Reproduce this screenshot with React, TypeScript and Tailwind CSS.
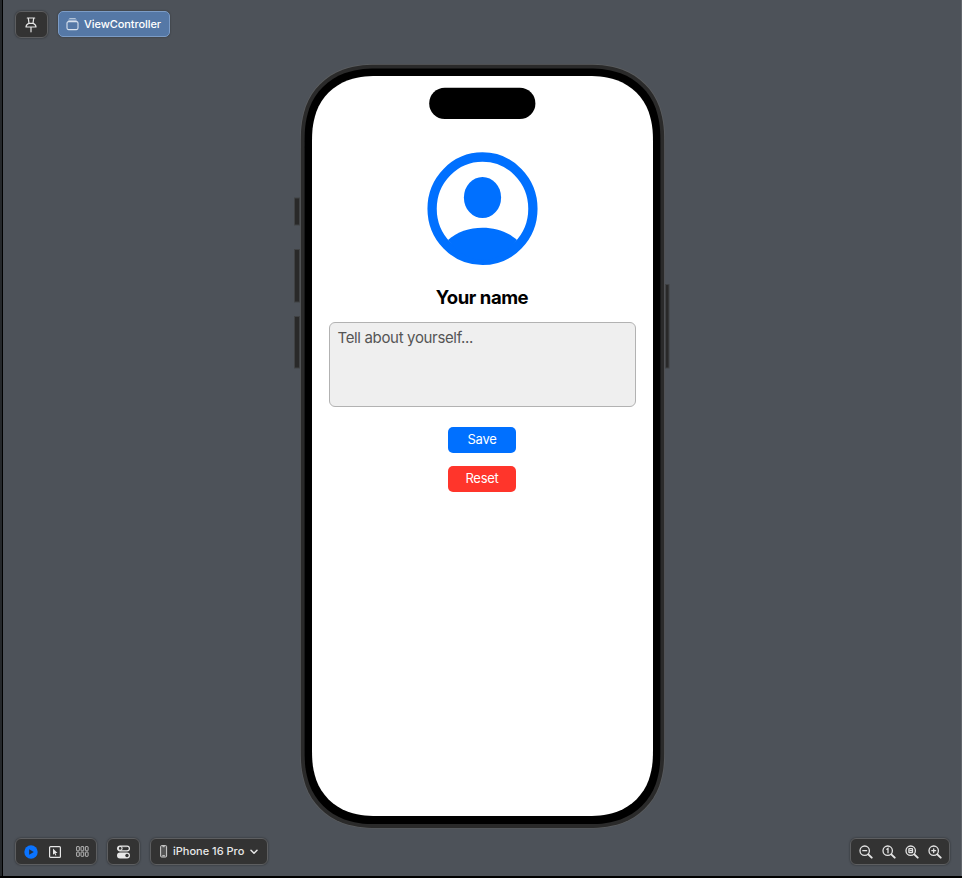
import React from "react";

type BoxProps = { className?: string; children: React.ReactNode };

// Rounded rectangle with continuous-curvature corners.
function squircle(x: number, y: number, w: number, h: number, r: number) {
  const a = 1.25 * r;
  const b = 0.98 * r;
  const c = 0.86841 * r;
  const d = 0.63149 * r;
  const e = 0.07491 * r;
  const f = 0.37282 * r;
  const g = 0.16906 * r;
  const R = x + w;
  const B = y + h;
  return [
    `M${x + a} ${y}H${R - a}`,
    `C${R - b} ${y} ${R - c} ${y} ${R - d} ${y + e}`,
    `C${R - f} ${y + g} ${R - g} ${y + f} ${R - e} ${y + d}`,
    `C${R} ${y + c} ${R} ${y + b} ${R} ${y + a}V${B - a}`,
    `C${R} ${B - b} ${R} ${B - c} ${R - e} ${B - d}`,
    `C${R - g} ${B - f} ${R - f} ${B - g} ${R - d} ${B - e}`,
    `C${R - c} ${B} ${R - b} ${B} ${R - a} ${B}H${x + a}`,
    `C${x + b} ${B} ${x + c} ${B} ${x + d} ${B - e}`,
    `C${x + f} ${B - g} ${x + g} ${B - f} ${x + e} ${B - d}`,
    `C${x} ${B - c} ${x} ${B - b} ${x} ${B - a}V${y + a}`,
    `C${x} ${y + b} ${x} ${y + c} ${x + e} ${y + d}`,
    `C${x + g} ${y + f} ${x + f} ${y + g} ${x + d} ${y + e}`,
    `C${x + c} ${y} ${x + b} ${y} ${x + a} ${y}Z`,
  ].join("");
}

function ToolBox({ className = "", children }: BoxProps) {
  return (
    <div
      className={`flex h-[27px] items-center rounded-[6px] border border-[#5d5e60] bg-[#333333] shadow-[0_0_2px_rgba(0,0,0,0.5)] ${className}`}
    >
      {children}
    </div>
  );
}

function PinIcon() {
  return (
    <svg width="12" height="16" viewBox="0 0 12 16" fill="none" stroke="#e6e6e6" strokeWidth="1.2" strokeLinejoin="round" strokeLinecap="round">
      <path d="M2.3 1h7.4M3.3 1.2 4 6.3C2 7.2 1 8.4 1 10h10c0-1.6-1-2.8-3-3.7l.7-5.1M4 6.300h4M6 10.200v4.600" />
    </svg>
  );
}

function ControllerIcon() {
  return (
    <svg width="13" height="14" viewBox="0 0 13 14" fill="none" stroke="#d9e2ee" strokeLinecap="round">
      <path d="M3.7 1.500h5.600" strokeWidth="1" opacity=".7" />
      <path d="M2.700 3.200h7.600" strokeWidth="1" opacity=".85" />
      <rect x="1" y="4.600" width="11" height="8" rx="1.500" strokeWidth="1.100" />
    </svg>
  );
}

function PlayIcon() {
  return (
    <svg width="14" height="14" viewBox="0 0 14 14">
      <circle cx="7" cy="7" r="6.700" fill="#0a73ff" />
      <path d="M5.100 4.200v5.600L9.800 7z" fill="#25303f" />
    </svg>
  );
}

function SelectIcon() {
  return (
    <svg width="12" height="12" viewBox="0 0 12 12">
      <rect x=".6" y=".6" width="10.800" height="10.800" rx="1" fill="none" stroke="#e6e6e6" strokeWidth="1.200" />
      <path d="M4 2.400v6.300l1.500-1.300.9 2.200 1-.4-.9-2.100h2z" fill="#e6e6e6" />
    </svg>
  );
}

function GridIcon() {
  return (
    <svg width="13" height="11" viewBox="0 0 13 11" fill="none" stroke="#c4c4c4" strokeWidth=".9">
      {[0.6, 5, 9.4].map((x) =>
        [0.6, 6.1].map((y) => <rect key={`${x}-${y}`} x={x} y={y} width="2.700" height="4.200" rx=".4" />),
      )}
    </svg>
  );
}

function SettingsIcon() {
  return (
    <svg width="13" height="14" viewBox="0 0 13 14">
      <rect x=".6" y="1.100" width="11.800" height="4.700" rx="2.350" fill="none" stroke="#e8e8e8" strokeWidth="1.200" />
      <circle cx="3.200" cy="3.450" r="1.900" fill="none" stroke="#e8e8e8" strokeWidth="1.100" />
      <path d="M5 1.500h5v.8H5z" fill="#e8e8e8" opacity=".4" />
      <rect x="0" y="7.500" width="13" height="5.900" rx="2.950" fill="#e8e8e8" />
      <circle cx="10" cy="10.450" r="1.700" fill="#333333" />
    </svg>
  );
}

function PhoneIcon() {
  return (
    <svg width="8" height="13" viewBox="0 0 8 13">
      <rect x=".6" y=".6" width="6" height="11.400" rx="1" fill="#555555" stroke="#cfcfcf" strokeWidth="1" />
      <path d="M2.500 1.700h2.200M2.300 10.700h2.600" stroke="#dedede" strokeWidth=".9" />
    </svg>
  );
}

function Magnifier({ children }: { children: React.ReactNode }) {
  return (
    <svg width="14" height="14" viewBox="0 0 14 14" fill="none" stroke="#e4e4e4" strokeWidth="1.300" strokeLinecap="round">
      <circle cx="5.700" cy="5.700" r="4.700" />
      <path d="m9.300 9.300 3.400 3.400" strokeWidth="1.900" />
      {children}
    </svg>
  );
}

function Avatar() {
  return (
    <svg className="mt-[33px]" width="112" height="114" viewBox="-1.5 0 112 114" fill="#0070ff">
      <ellipse cx="55" cy="56.700" rx="50.400" ry="51.700" fill="none" stroke="#0070ff" strokeWidth="9.300" />
      <ellipse cx="55" cy="45.500" rx="18.600" ry="20.600" />
      <path d="M20.500 88C38 71.600 72 71.600 89.500 88C80 101 68 108 55 108S30 101 20.500 88Z" />
    </svg>
  );
}

function PhoneBody() {
  return (
    <svg className="absolute -left-[6px] top-0" width="377" height="765" viewBox="-6 0 377 765">
      <g fill="#292929" stroke="#404244" strokeWidth="1">
        <rect x="-5.500" y="134" width="5" height="27" />
        <rect x="-5.500" y="185.500" width="5" height="52.500" />
        <rect x="-5.500" y="252.500" width="5" height="51.500" />
        <rect x="365.500" y="220.500" width="3.500" height="83.500" />
      </g>
      <path d={squircle(0.1, 0, 364.8, 764.6, 67)} fill="#5c5e60" />
      <path d={squircle(0.8, 0.7, 363.4, 763.2, 66.4)} fill="#2a2a2a" />
      <path d={squircle(4.6, 4.5, 355.8, 755.6, 63)} fill="#000000" />
      <path d={squircle(12, 12, 341, 740, 57)} fill="#ffffff" />
      <rect x="129.200" y="23.800" width="106.200" height="31.200" rx="15.600" fill="#000000" />
    </svg>
  );
}

export default function App() {
  return (
    <div className="flex h-[878px] w-[962px] border-b-2 border-black bg-[#4d5259] font-['Inter','Liberation_Sans',sans-serif]">
      <div className="w-[3px] shrink-0 border-r border-black bg-[#25282b]" />
      <div className="flex flex-1 flex-col border-r border-[#62676d]">
        <header className="flex h-[64px] items-start gap-[10px] pl-3 pt-[11px]">
          <ToolBox className="w-[33px] pl-[9px]">
            <PinIcon />
          </ToolBox>
          <div className="flex h-[26px] w-[112px] items-center gap-[5px] rounded-[5px] border border-[#7c9cc6] bg-[#5578a6] pl-[7px] text-[11px] font-medium tracking-[-0.07px] text-white shadow-[0_0_2px_rgba(0,0,0,0.4)]">
            <ControllerIcon />
            <span>ViewController</span>
          </div>
        </header>

        <main className="relative ml-[297px] h-[765px] w-[365px]">
          <PhoneBody />
          <div className="relative flex h-full w-[364px] flex-col items-center pt-[55px]">
            <Avatar />
            <h1 className="mt-[19px] text-[18.5px] font-bold leading-6 tracking-[-0.45px] text-black">Your name</h1>
            <div className="ml-px mt-[13px] h-[85px] w-[307px] rounded-[6px] border border-[#b2b2b2] bg-[#efefef] px-[7.500px] pt-[5px] text-[15px] leading-[20px] tracking-[-0.34px] text-[#555555]">
              Tell about yourself...
            </div>
            <button className="mt-[20px] h-[25.500px] w-[68px] rounded-[5px] bg-[#0070ff] text-[13px] leading-[25px] tracking-[-0.25px] text-white">Save</button>
            <button className="mt-[13.500px] h-[25.500px] w-[68px] rounded-[5px] bg-[#ff352b] text-[13px] leading-[25px] tracking-[-0.25px] text-white">Reset</button>
          </div>
        </main>

        <footer className="flex items-center pl-3 pr-[11px] pt-[9px]">
          <ToolBox className="w-[82px] pl-[7.500px]">
            <PlayIcon />
            <div className="ml-[11.500px]"><SelectIcon /></div>
            <div className="ml-[15px]"><GridIcon /></div>
          </ToolBox>
          <ToolBox className="ml-[10px] w-[33px] justify-center">
            <SettingsIcon />
          </ToolBox>
          <ToolBox className="ml-[10px] w-[118px] pl-[9px] text-[11px] font-medium text-[#e8e8e8]">
            <PhoneIcon />
            <span className="ml-[5px]">iPhone 16 Pro</span>
            <svg className="ml-[6px] mt-px" width="8" height="6" viewBox="0 0 8 6" fill="none" stroke="#e8e8e8" strokeWidth="1.500" strokeLinecap="round" strokeLinejoin="round">
              <path d="m1 1.200 3 3 3-3" />
            </svg>
          </ToolBox>
          <ToolBox className="ml-auto w-[100px] gap-[9px] pl-[7.500px]">
            <Magnifier>
              <path d="M3.800 5.700h3.800" />
            </Magnifier>
            <Magnifier>
              <path d="M4.800 4.200 6 3.500v4.300" />
            </Magnifier>
            <Magnifier>
              <rect x="3.900" y="3.700" width="3.600" height="4" rx=".5" />
              <path d="M5 5.700h1.500" />
            </Magnifier>
            <Magnifier>
              <path d="M3.800 5.700h3.800M5.700 3.800v3.800" />
            </Magnifier>
          </ToolBox>
        </footer>
      </div>
    </div>
  );
}
